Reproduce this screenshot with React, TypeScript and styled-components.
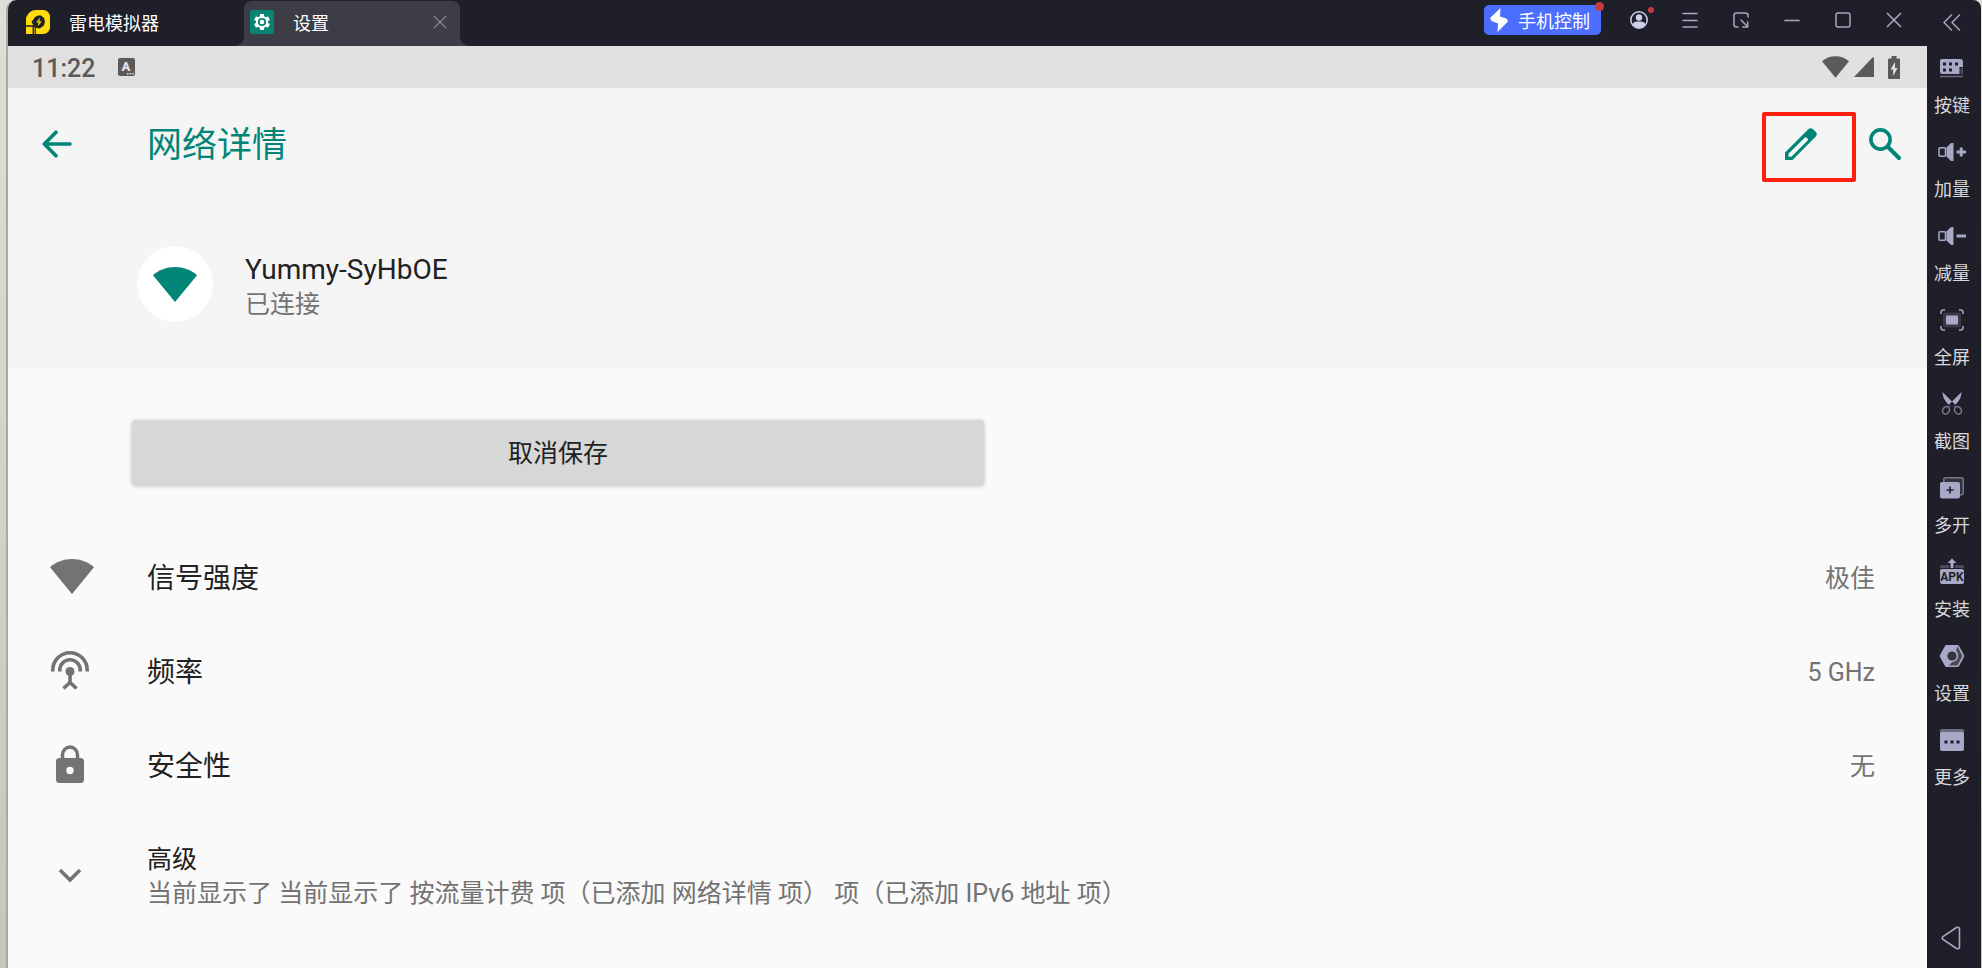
import React from 'react';
import styled, { createGlobalStyle } from 'styled-components';

const color = {
  frame: '#1f1f29',
  tab: '#3d3d48',
  lilac: '#a9a8c6',
  teal: '#008577',
  grey: '#737373',
  ink: '#212121',
  status: '#5a5a5a',
};

const GlobalStyle = createGlobalStyle`
  *, *::before, *::after { box-sizing: border-box; }
  body {
    margin: 0;
    font-family: Roboto, "Noto Sans CJK SC", sans-serif;
    color: ${color.ink};
  }
  button {
    border: 0;
    padding: 0;
    background: none;
    color: inherit;
    font: inherit;
    cursor: pointer;
  }
  svg { display: block; flex: none; }
  h1, h2, p, dl, dd { margin: 0; padding: 0; font-weight: 400; }
`;

const Desktop = styled.div`
  display: flex;
  min-height: 100vh;
  padding: 0 1px 0 6px;
  background: linear-gradient(#dfded9, #c6c5bf);
`;

const Window = styled.div`
  display: flex;
  flex: 1;
  min-width: 0;
  overflow: hidden;
  border-left: 2px solid #a9a9a4;
  border-radius: 10px 8px 0 0;
  background: ${color.frame};
`;

const Main = styled.div`
  display: flex;
  flex: 1;
  flex-direction: column;
  min-width: 0;
`;

const TitleBar = styled.header`
  display: flex;
  justify-content: space-between;
  height: 46px;
  color: #fff;
  font-family: "Noto Sans CJK SC", sans-serif;
  font-size: 18px;
  line-height: 24px;
`;

const TabList = styled.nav`
  display: flex;
  align-items: flex-end;
`;

const Tab = styled.div<{ $active?: boolean }>`
  position: relative;
  display: flex;
  align-items: center;
  gap: 19px;
  width: ${(p) => (p.$active ? 216 : 236)}px;
  height: 45px;
  padding: ${(p) => (p.$active ? '0 13px 3px 6px' : '0 0 3px 18px')};
  border-radius: 8px 8px 0 0;
  background: ${(p) => (p.$active ? color.tab : 'transparent')};

  &::before, &::after {
    content: ${(p) => (p.$active ? '""' : 'none')};
    position: absolute;
    bottom: 0;
    width: 10px;
    height: 10px;
  }
  &::before {
    right: 100%;
    background: radial-gradient(circle at 0 0, transparent 10px, ${color.tab} 10px);
  }
  &::after {
    left: 100%;
    background: radial-gradient(circle at 100% 0, transparent 10px, ${color.tab} 10px);
  }
`;

const TabLabel = styled.span`
  flex: 1;
`;

const WindowTools = styled.div`
  display: flex;
  align-items: center;
  height: 40px;
  padding-right: 8px;
`;

const PhoneButton = styled.button`
  position: relative;
  display: flex;
  align-items: center;
  gap: 10px;
  width: 117px;
  height: 30px;
  margin-right: 12px;
  padding-left: 6px;
  border-radius: 5px;
  background: #4b6eff;
`;

const Dot = styled.span<{ $size: number; $top: number; $right: number }>`
  position: absolute;
  top: ${(p) => p.$top}px;
  right: ${(p) => p.$right}px;
  width: ${(p) => p.$size}px;
  height: ${(p) => p.$size}px;
  border-radius: 50%;
  background: #cb3b3e;
`;

const ToolButton = styled.button`
  position: relative;
  display: grid;
  place-items: center;
  width: 51px;
  height: 40px;
`;

const StatusBar = styled.div`
  display: flex;
  align-items: center;
  justify-content: space-between;
  height: 42px;
  padding: 0 27px 0 24px;
  background: #e0e0e0;
  color: ${color.status};
  font-size: 25px;
  line-height: 32px;
`;

const StatusGroup = styled.div<{ $gap: number }>`
  display: flex;
  align-items: center;
  gap: ${(p) => p.$gap}px;
`;

const BatterySlot = styled.span`
  padding-left: 9px;
`;

const Clock = styled.time`
  padding-top: 4px;
  font-weight: 500;
`;

const Screen = styled.main`
  flex: 1;
  background: #fafafa;
`;

const Header = styled.div`
  height: 280px;
  background: #f5f5f5;
`;

const AppBar = styled.div`
  position: relative;
  display: flex;
  align-items: center;
  height: 112px;
  color: ${color.teal};
`;

const BackButton = styled.button`
  display: flex;
  align-items: center;
  width: 139px;
  height: 84px;
  padding-left: 34px;
`;

const Title = styled.h1`
  flex: 1;
  padding-top: 4px;
  font-size: 35px;
  line-height: 48px;
`;

const ActionButton = styled.button`
  display: grid;
  place-items: center;
  width: 84px;
  height: 84px;
`;

const Highlight = styled.div`
  position: absolute;
  top: 24px;
  right: 71px;
  width: 94px;
  height: 70px;
  border: 4px solid #ff1f0f;
  border-radius: 2px;
  pointer-events: none;
`;

const Network = styled.section`
  display: flex;
  align-items: center;
  gap: 32px;
  padding: 46px 0 0 129px;
`;

const Avatar = styled.div`
  display: grid;
  place-items: center;
  width: 76px;
  height: 76px;
  border-radius: 50%;
  background: #fff;
  color: ${color.teal};
`;

const NetworkText = styled.div`
  padding-top: 6px;
`;

const NetworkName = styled.h2`
  font-size: 28px;
  line-height: 36px;
`;

const Secondary = styled.p`
  color: ${color.grey};
  font-size: 25px;
  line-height: 34px;
`;

const ButtonBar = styled.div`
  display: grid;
  grid-template-columns: 1fr 1fr;
  gap: 16px;
  padding: 52px 75px 44px 124px;
`;

const ForgetButton = styled.button`
  height: 65px;
  padding-top: 2px;
  border-radius: 4px;
  background: #d6d8d7;
  box-shadow: 0 1px 4px rgba(0, 0, 0, 0.24);
  font-size: 25px;
  line-height: 34px;
`;

const Row = styled.div`
  display: flex;
  align-items: center;
  height: 94px;
  padding-right: 52px;
`;

const RowIcon = styled.span`
  width: 139px;
  padding-left: 40px;
  color: ${color.grey};
`;

const RowLabel = styled.dt`
  flex: 1;
  padding-top: 6px;
  font-size: 28px;
  line-height: 38px;
`;

const RowValue = styled.dd`
  padding-top: 6px;
  color: ${color.grey};
  font-size: 25px;
  line-height: 34px;
`;

const AdvancedRow = styled.button`
  display: flex;
  align-items: center;
  width: 100%;
  height: 128px;
  text-align: left;
`;

const AdvancedText = styled.div`
  padding-top: 4px;
`;

const AdvancedTitle = styled.p`
  font-size: 25px;
  line-height: 34px;
`;

const Sidebar = styled.aside`
  display: flex;
  flex-direction: column;
  align-items: center;
  width: 54px;
  padding: 0 4px 18px 0;
  color: #d8d8dc;
  font-family: "Noto Sans CJK SC", sans-serif;
  font-size: 18px;
  line-height: 24px;
`;

const CollapseButton = styled.button`
  display: grid;
  place-items: center;
  width: 50px;
  height: 46px;
  padding-bottom: 2px;
`;

const SideButton = styled.button`
  display: flex;
  flex-direction: column;
  align-items: center;
  gap: 12px;
  width: 50px;
  height: 84px;
  padding-top: 10px;
  white-space: nowrap;
`;

const NavBack = styled.button`
  margin-top: auto;
  padding-right: 2px;
`;

const LdLogo = () => (
  <svg width="24" height="24" viewBox="0 0 24 24">
    <path d="M0 24V8C2 3 5 0 10 0h7c4 0 7 3 7 7v10c0 4-3 7-7 7z" fill="#ffdc0a" />
    <path d="M9 7l3-1.500h3L18 8l1 4-1.500 4-4 2.500-3-.5L7 14.500 5.500 12z" fill={color.frame} />
    <path d="M0 16h9M7.200 15v9M9.200 15v9" fill="none" stroke={color.frame} strokeWidth="1.300" />
    <path d="M14 7.500L10 12.500h2.500l-.8 4L16 11.500h-2.500z" fill="#e8c80c" />
  </svg>
);

const GearLogo = () => (
  <svg width="24" height="24" viewBox="0 0 24 24">
    <rect width="24" height="24" rx="2" fill="#068474" />
    <g transform="translate(2.400 2.400) scale(.8)">
      <path
        fill="#fff"
        fillRule="evenodd"
        d="M19.430 12.980c.04-.32.07-.64.07-.98s-.03-.66-.07-.98l2.110-1.650c.19-.15.24-.42.12-.64l-2-3.460c-.12-.22-.39-.3-.61-.22l-2.490 1c-.52-.4-1.080-.73-1.690-.98l-.38-2.650C14.460 2.180 14.250 2 14 2h-4c-.25 0-.46.18-.49.42l-.38 2.650c-.61.25-1.170.59-1.690.98l-2.490-1c-.23-.09-.49 0-.61.22l-2 3.460c-.13.22-.07.49.12.64l2.110 1.650c-.04.32-.07.65-.07.98s.03.66.07.98l-2.110 1.650c-.19.15-.24.42-.12.64l2 3.460c.12.22.39.3.61.22l2.490-1c.52.4 1.080.73 1.690.98l.38 2.650c.03.24.24.42.49.42h4c.25 0 .46-.18.49-.42l.38-2.650c.61-.25 1.170-.59 1.690-.98l2.490 1c.23.09.49 0 .61-.22l2-3.460c.12-.22.07-.49-.12-.64z"
      />
      <circle cx="12" cy="12" r="4" fill="none" stroke="#068474" strokeWidth="2.200" />
    </g>
  </svg>
);

const Cross = ({ size, stroke }: { size: number; stroke: string }) => (
  <svg width={size} height={size} viewBox="0 0 16 16">
    <path d="M1 1l14 14M15 1L1 15" stroke={stroke} strokeWidth="1.500" />
  </svg>
);

const Bolt = () => (
  <svg width="18" height="24" viewBox="0 0 18 24">
    <path d="M10.500 0L0 10l1.500 3L8 15.500l-.5 8.500L18 13.500l-1.500-3L10 8.500z" fill="#fff" />
  </svg>
);

const UserIcon = () => (
  <svg width="18" height="18" viewBox="0 0 18 18">
    <circle cx="9" cy="9" r="8.200" fill="none" stroke="#cfcfeb" strokeWidth="1.500" />
    <circle cx="9" cy="6.500" r="3.200" fill="#cfcfeb" />
    <path d="M2.500 13c1-2 3-2.500 6.500-2.500s5.500.500 6.500 2.500c-1.500 2.500-4 4-6.500 4s-5-1.500-6.500-4z" fill="#cfcfeb" />
  </svg>
);

const LineIcon = ({ d }: { d: string }) => (
  <svg width="18" height="18" viewBox="0 0 18 18" fill="none" stroke={color.lilac} strokeWidth="1.500" strokeLinecap="round" strokeLinejoin="round">
    <path d={d} />
  </svg>
);

const WifiFan = ({ width, height }: { width: number; height: number }) => (
  <svg width={width} height={height} viewBox="0 0 44 35" fill="currentColor">
    <path d="M0 8.200C6 3 13.500 0 22 0s16 3 22 8.200L22 35z" />
  </svg>
);

const InputMethodIcon = () => (
  <svg width="17" height="18" viewBox="0 0 17 18">
    <rect width="17" height="18" rx="2" fill={color.status} />
    <text x="8" y="13" textAnchor="middle" fontFamily="Roboto, sans-serif" fontWeight="900" fontSize="13" fill="#e0e0e0">A</text>
    <path d="M9 15.800h1.500M11.500 15.800H13M14 15.800h1.500" stroke="#e0e0e0" strokeWidth="1.500" />
  </svg>
);

const SignalIcon = () => (
  <svg width="20" height="20" viewBox="0 0 20 20" fill="currentColor">
    <path d="M0 20L18.500.500Q20-.500 20 1.500V20z" />
  </svg>
);

const BatteryIcon = () => (
  <svg width="12" height="23" viewBox="0 0 12 23">
    <path d="M3.500 0h5v2.500H11q1 0 1 1V22q0 1-1 1H1q-1 0-1-1V3.500q0-1 1-1h2.500z" fill="currentColor" />
    <path d="M7 6l-4.500 7.500h2.700V20l4.300-8H7z" fill="#e0e0e0" />
  </svg>
);

const ArrowIcon = () => (
  <svg width="30" height="28" viewBox="0 0 30 28" fill="none" stroke="currentColor" strokeWidth="3.600" strokeLinecap="round" strokeLinejoin="round">
    <path d="M28 14H2.500M14 2.200L2.300 14 14 25.800" />
  </svg>
);

const PencilIcon = () => (
  <svg width="32" height="32" viewBox="0 0 32 32" fill="currentColor">
    <path fillRule="evenodd" d="M0 32v-7.500L23.300 1.300q2.500-2.300 4.700 0l2.800 2.800q2 2.200 0 4.400L7.500 32zM3.500 25.800v3h3L22.600 12.600q.8-1 0-1.800l-1-1q-1-.900-2 0z" />
  </svg>
);

const SearchIcon = () => (
  <svg width="32" height="32" viewBox="0 0 32 32" fill="none" stroke="currentColor" strokeLinecap="round">
    <circle cx="11.500" cy="11.500" r="9.600" strokeWidth="3.600" />
    <path d="M19.500 19.500l10.500 10.500" strokeWidth="4" />
  </svg>
);

const AntennaIcon = () => (
  <svg width="44" height="44" viewBox="0 0 44 44" fill="none" stroke="currentColor" strokeWidth="3.600">
    <path d="M4.800 23.500V22a17.200 17.200 0 0 1 34.400 0v1.500M11.800 23.500V22a10.200 10.200 0 0 1 20.400 0v1.500" />
    <circle cx="22" cy="23.500" r="4.500" fill="currentColor" stroke="none" />
    <path d="M22 25v10M15.500 40.500l6.500-6 6.500 6" />
  </svg>
);

const LockIcon = () => (
  <svg width="44" height="44" viewBox="0 0 44 44">
    <path d="M14.500 18v-5a7.500 8 0 0 1 15 0v5" fill="none" stroke="currentColor" strokeWidth="3.500" />
    <path fill="currentColor" fillRule="evenodd" d="M11.500 16h21q3.500 0 3.500 3.500v18q0 3.500-3.500 3.500h-21Q8 41 8 37.500v-18Q8 16 11.500 16zM22 24.800a3.700 3.700 0 1 0 0 7.400 3.700 3.700 0 0 0 0-7.400z" />
  </svg>
);

const ChevronIcon = () => (
  <svg width="44" height="44" viewBox="0 0 44 44" fill="none" stroke="currentColor" strokeWidth="3.600">
    <path d="M12 17l10 10 10-10" />
  </svg>
);

const SideIcon = ({ children }: { children: React.ReactNode }) => (
  <svg width="28" height="24" viewBox="0 0 28 24" overflow="visible">{children}</svg>
);

const shade = '#4a4957';

const Speaker = () => (
  <>
    <rect x="1" y="7.700" width="6.500" height="8.600" rx="1" fill={color.frame} stroke={color.lilac} strokeWidth="1.500" />
    <path d="M8.500 7.500L12.500 3.500q.7-.5 1.500-.5h1.500v18H14q-.8 0-1.500-.5l-4-4z" fill={color.lilac} />
  </>
);

const sideItems: { label: string; icon: React.ReactNode }[] = [
  {
    label: '按键',
    icon: (
      <>
        <path d="M2 5q0-2 2-2h18q3 0 3 3v5h-3.500v7H4q-2 0-2-2z" fill={color.lilac} />
        <path d="M5 6.500h3v3H5zM11 6.500h3v3h-3zM17 6.500h3v3h-3zM5 12.500h3v3H5zM11 12.500h3v3h-3z" fill={color.frame} />
        <path d="M22.500 12H25v6h-2.500z" fill={shade} />
        <path d="M2 20.500h23" stroke="#6b6a7e" strokeWidth="1.500" />
      </>
    ),
  },
  {
    label: '加量',
    icon: (
      <>
        <Speaker />
        <path d="M18.500 12H28M23.200 7.500v9" stroke={color.lilac} strokeWidth="3" />
      </>
    ),
  },
  {
    label: '减量',
    icon: (
      <>
        <Speaker />
        <path d="M18.500 12H28" stroke={color.lilac} strokeWidth="3" />
      </>
    ),
  },
  {
    label: '全屏',
    icon: (
      <>
        <rect x="5" y="4.500" width="18" height="15" rx="2" fill="#3b3b48" />
        <rect x="8" y="7.500" width="12" height="9" rx="1" fill={color.lilac} />
        <path d="M7 2H5.500Q3 2 3 4.500V6M21 2h1.500Q25 2 25 4.500V6M7 22H5.500Q3 22 3 19.500V18M21 22h1.500q2.500 0 2.500-2.500V18" fill="none" stroke={color.lilac} strokeWidth="1.500" />
      </>
    ),
  },
  {
    label: '截图',
    icon: (
      <>
        <g fill="none" stroke="#77768c" strokeWidth="1.600">
          <ellipse cx="8" cy="18.300" rx="3.200" ry="4" transform="rotate(35 8 18.300)" />
          <ellipse cx="20" cy="18.300" rx="3.200" ry="4" transform="rotate(-35 20 18.300)" />
        </g>
        <path d="M4.500 0Q4.500 6 9 11l5 5 3-3.500zM23.500 0Q23.500 6 19 11l-5 5-3-3.500z" fill={color.lilac} />
      </>
    ),
  },
  {
    label: '多开',
    icon: (
      <>
        <rect x="5.700" y="1.700" width="19.500" height="17" rx="2" fill="#34343f" stroke="#77768c" strokeWidth="1.500" />
        <rect x="2" y="6" width="20" height="16.500" rx="2" fill={color.lilac} />
        <path d="M8.500 14h7M12 10.500v7" stroke={color.frame} strokeWidth="1.600" />
      </>
    ),
  },
  {
    label: '安装',
    icon: (
      <>
        <path d="M2 8V7q0-2 2-2h7v3zM17 5h7q2 0 2 2v1h-9z" fill={shade} />
        <path d="M14-1.500l4.500 4.500h-3v5h-3V3h-3z" fill={color.lilac} />
        <rect x="2" y="9" width="24" height="15" rx="2" fill={color.lilac} />
        <text x="14" y="21" textAnchor="middle" fontFamily="Roboto, sans-serif" fontWeight="700" fontSize="12" fill={color.frame}>APK</text>
      </>
    ),
  },
  {
    label: '设置',
    icon: (
      <>
        <path d="M8.500 1h11q1 0 1.500 1l5 9q.5 1 0 2l-5 9q-.5 1-1.500 1h-11q-1 0-1.500-1l-5-9q-.5-1 0-2l5-9q.5-1 1.500-1z" fill={color.lilac} />
        <path d="M19.500 2.500l5 9.500-5 9.500H11l3-3.500q6-1 6-7-.5-3-2-4.500z" fill={shade} />
        <circle cx="14" cy="12" r="6" fill={color.lilac} />
        <circle cx="14" cy="12" r="4.600" fill="#34343f" />
      </>
    ),
  },
  {
    label: '更多',
    icon: (
      <>
        <rect x="2" y="1" width="24" height="10" rx="1.500" fill="#6b6a7e" />
        <rect x="2" y="4" width="24" height="19" rx="2" fill={color.lilac} />
        <path d="M6.500 12.500h3v3h-3zM12.500 12.500h3v3h-3zM18.500 12.500h3v3h-3z" fill={color.frame} />
      </>
    ),
  },
];

const rows = [
  { label: '信号强度', value: '极佳', icon: <WifiFan width={48} height={35} /> },
  { label: '频率', value: '5 GHz', icon: <AntennaIcon /> },
  { label: '安全性', value: '无', icon: <LockIcon /> },
];

export default function App() {
  return (
    <>
      <GlobalStyle />
      <Desktop>
        <Window>
          <Main>
            <TitleBar>
              <TabList>
                <Tab>
                  <LdLogo />
                  <TabLabel>雷电模拟器</TabLabel>
                </Tab>
                <Tab $active>
                  <GearLogo />
                  <TabLabel>设置</TabLabel>
                  <button aria-label="关闭标签">
                    <Cross size={14} stroke="#8d8c98" />
                  </button>
                </Tab>
              </TabList>
              <WindowTools>
                <PhoneButton>
                  <Bolt />
                  手机控制
                  <Dot $size={9} $top={-3} $right={-3} />
                </PhoneButton>
                <ToolButton aria-label="账户">
                  <UserIcon />
                  <Dot $size={6} $top={7} $right={10} />
                </ToolButton>
                <ToolButton aria-label="菜单">
                  <LineIcon d="M2 2.500h14M2 9.500h14M2 16h14" />
                </ToolButton>
                <ToolButton aria-label="小窗">
                  <LineIcon d="M6 16H4.500Q2 16 2 13.500v-9Q2 2 4.500 2h9Q16 2 16 4.500V6M9 9l6.500 6.500M15.700 11v5h-5" />
                </ToolButton>
                <ToolButton aria-label="最小化">
                  <LineIcon d="M2 9.500h14" />
                </ToolButton>
                <ToolButton aria-label="最大化">
                  <LineIcon d="M4 2h10q2 0 2 2v10q0 2-2 2H4q-2 0-2-2V4q0-2 2-2z" />
                </ToolButton>
                <ToolButton aria-label="关闭">
                  <Cross size={16} stroke={color.lilac} />
                </ToolButton>
              </WindowTools>
            </TitleBar>

            <StatusBar>
              <StatusGroup $gap={23}>
                <Clock>11:22</Clock>
                <InputMethodIcon />
              </StatusGroup>
              <StatusGroup $gap={5}>
                <WifiFan width={27} height={22} />
                <SignalIcon />
                <BatterySlot>
                  <BatteryIcon />
                </BatterySlot>
              </StatusGroup>
            </StatusBar>

            <Screen>
              <Header>
                <AppBar>
                  <BackButton aria-label="返回">
                    <ArrowIcon />
                  </BackButton>
                  <Title>网络详情</Title>
                  <ActionButton aria-label="修改">
                    <PencilIcon />
                  </ActionButton>
                  <ActionButton aria-label="搜索">
                    <SearchIcon />
                  </ActionButton>
                  <Highlight />
                </AppBar>
                <Network>
                  <Avatar>
                    <WifiFan width={44} height={35} />
                  </Avatar>
                  <NetworkText>
                    <NetworkName>Yummy-SyHbOE</NetworkName>
                    <Secondary>已连接</Secondary>
                  </NetworkText>
                </Network>
              </Header>

              <ButtonBar>
                <ForgetButton>取消保存</ForgetButton>
              </ButtonBar>

              <dl>
                {rows.map((row) => (
                  <Row key={row.label}>
                    <RowIcon>{row.icon}</RowIcon>
                    <RowLabel>{row.label}</RowLabel>
                    <RowValue>{row.value}</RowValue>
                  </Row>
                ))}
              </dl>
              <AdvancedRow>
                <RowIcon>
                  <ChevronIcon />
                </RowIcon>
                <AdvancedText>
                  <AdvancedTitle>高级</AdvancedTitle>
                  <Secondary>当前显示了 当前显示了 按流量计费 项（已添加 网络详情 项） 项（已添加 IPv6 地址 项）</Secondary>
                </AdvancedText>
              </AdvancedRow>
            </Screen>
          </Main>

          <Sidebar>
            <CollapseButton aria-label="收起">
              <LineIcon d="M8.500 2L1 9.500 8.500 17M16.500 2L9 9.500l7.500 7.500" />
            </CollapseButton>
            {sideItems.map((item) => (
              <SideButton key={item.label}>
                <SideIcon>{item.icon}</SideIcon>
                {item.label}
              </SideButton>
            ))}
            <NavBack aria-label="系统返回">
              <svg width="20" height="24" viewBox="0 0 20 24" fill="none" stroke={color.lilac} strokeWidth="1.600">
                <path d="M15.500 1.500L2 10.500q-1.500 1.500 0 3l13.500 9q3 1 3-2v-17q0-3-3-2z" />
              </svg>
            </NavBack>
          </Sidebar>
        </Window>
      </Desktop>
    </>
  );
}
